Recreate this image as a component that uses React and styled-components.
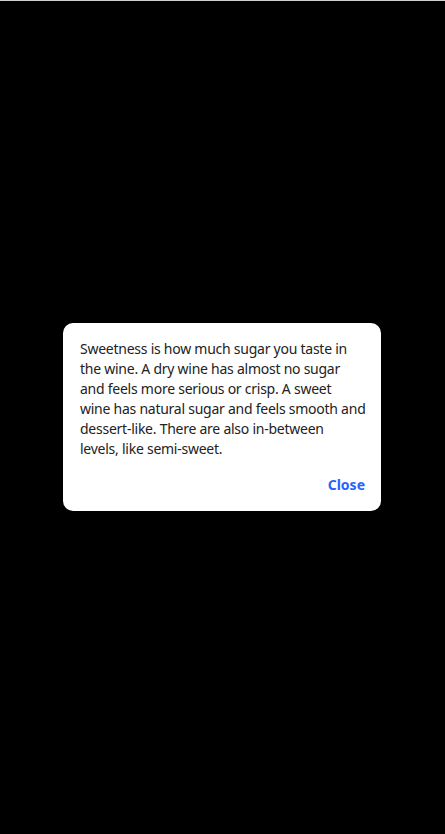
import React from "react";
import styled, { createGlobalStyle } from "styled-components";

const GlobalStyle = createGlobalStyle`
  html, body {
    margin: 0;
    padding: 0;
    background: #000;
  }
  body {
    font-family: "Noto Sans", "Open Sans", sans-serif;
  }
`;

const Overlay = styled.div`
  min-height: 834px;
  box-sizing: border-box;
  border-top: 1px solid #cfcfcf;
  padding: 0 1px 1px 0;
  background: #000;
  display: flex;
  align-items: center;
  justify-content: center;
`;

const Dialog = styled.div`
  width: 318px;
  box-sizing: border-box;
  background: #fff;
  border-radius: 10px;
  padding: 16px 16px 16px 17px;
`;

const Body = styled.p`
  margin: 0;
  font-size: 14px;
  line-height: 20px;
  color: #222;
  letter-spacing: -0.25px;
`;

const Line = styled.span`
  display: block;
  white-space: nowrap;
`;

const Actions = styled.div`
  display: flex;
  justify-content: flex-end;
  margin-top: 16px;
`;

const TextButton = styled.button`
  border: none;
  background: none;
  padding: 0;
  font-family: inherit;
  font-size: 14px;
  line-height: 20px;
  font-weight: 700;
  color: #2962ff;
  cursor: pointer;
`;

const lines = [
  "Sweetness is how much sugar you taste in",
  "the wine. A dry wine has almost no sugar",
  "and feels more serious or crisp. A sweet",
  "wine has natural sugar and feels smooth and",
  "dessert-like. There are also in-between",
  "levels, like semi-sweet.",
];

function App() {
  return (
    <>
      <GlobalStyle />
      <Overlay>
        <Dialog>
          <Body>
            {lines.map((l) => (
              <Line key={l}>{l}</Line>
            ))}
          </Body>
          <Actions>
            <TextButton>Close</TextButton>
          </Actions>
        </Dialog>
      </Overlay>
    </>
  );
}

export default App;
